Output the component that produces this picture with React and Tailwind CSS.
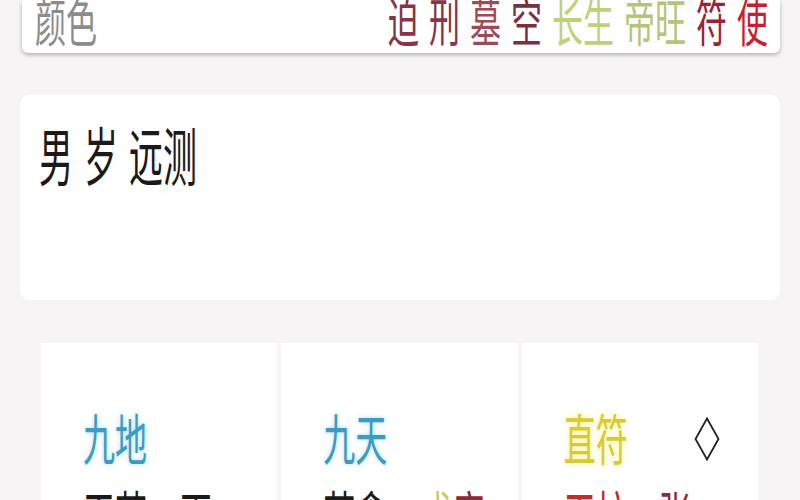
import React from "react";

const S = ({ children, className = "" }) => (
  <span className={"inline-block whitespace-nowrap " + className}>{children}</span>
);

function Cell({ title, titleClass, extra, row2 }) {
  return (
    <div className="bg-white h-[200px] pl-[42px] pt-[66px]">
      <div className="h-[77px] flex items-start">
        <S className={"text-[32px] leading-[32px] origin-top scale-y-[1.7] " + titleClass}>{title}</S>
        {extra}
      </div>
      <div className="flex items-start">{row2}</div>
    </div>
  );
}

export default function App() {
  return (
    <div className="w-[800px] h-[500px] overflow-hidden bg-[#f7f4f6] font-['Noto_Sans_CJK_SC',sans-serif]">
      {/* top card */}
      <div className="mx-[22px] mr-[20px] h-[53px] bg-white rounded-b-[6px] shadow-[0_2px_4px_rgba(0,0,0,0.28)] flex items-end justify-between pl-[13px] pr-[12px] pb-[8px]">
        <S className="text-[31px] leading-[31px] origin-bottom scale-y-[1.7] text-[#8c8c8c]">颜色</S>
        <div className="flex gap-[10px] text-[31px] leading-[31px]">
          <S className="origin-bottom scale-y-[1.7] text-[#8a3446]">迫</S>
          <S className="origin-bottom scale-y-[1.7] text-[#8a3446]">刑</S>
          <S className="origin-bottom scale-y-[1.7] text-[#a04a58]">墓</S>
          <S className="origin-bottom scale-y-[1.7] text-[#7a3040]">空</S>
          <S className="origin-bottom scale-y-[1.7] text-[#bcd27a]">长生</S>
          <S className="origin-bottom scale-y-[1.7] text-[#b4c478]">帝旺</S>
          <S className="origin-bottom scale-y-[1.7] text-[#9c2236]">符</S>
          <S className="origin-bottom scale-y-[1.7] text-[#c8202e]">使</S>
        </div>
      </div>

      {/* question card */}
      <div className="mt-[42px] mx-[20px] h-[205px] bg-white rounded-[10px] pl-[19px] pt-[28px]">
        <div className="flex gap-[11px] text-[34px] leading-[34px] text-[#1a1a1a]">
          <S className="origin-top scale-y-[1.85]">男</S>
          <S className="origin-top scale-y-[1.85]">岁</S>
          <S className="origin-top scale-y-[1.85]">远测</S>
        </div>
      </div>

      {/* grid */}
      <div className="mt-[43px] ml-[41px] w-[717px] grid grid-cols-3 gap-[4px]">
        <Cell
          title="九地"
          titleClass="text-[#3a9cc4] [text-shadow:0_0_4px_rgba(120,200,230,0.6)]"
          row2={
            <>
              <S className="w-[97px] text-[32px] leading-[32px] origin-top scale-y-[1.7] text-[#1a1a1a]">天芮</S>
              <S className="text-[32px] leading-[32px] origin-top scale-y-[1.7] text-[#1a1a1a]">丙</S>
            </>
          }
        />
        <Cell
          title="九天"
          titleClass="text-[#3a9cc4] [text-shadow:0_0_4px_rgba(120,200,230,0.6)]"
          row2={
            <>
              <S className="w-[97px] text-[32px] leading-[32px] origin-top scale-y-[1.7] text-[#1a1a1a]">芮禽</S>
              <S className="text-[32px] leading-[32px] origin-top scale-y-[1.7] text-[#bcd060]">戊</S>
              <S className="text-[32px] leading-[32px] origin-top scale-y-[1.7] text-[#8a2a3a]">庚</S>
            </>
          }
        />
        <Cell
          title="直符"
          titleClass="text-[#d8ca32] [text-shadow:0_0_5px_rgba(250,240,110,0.9)]"
          extra={
            <svg className="ml-[66px] mt-[8px]" width="26" height="44" viewBox="0 0 26 44">
              <path d="M13 1.5 L24.5 22 L13 42.5 L1.5 22 Z" fill="none" stroke="#222" strokeWidth="1.8" strokeLinejoin="miter" />
            </svg>
          }
          row2={
            <>
              <S className="w-[95px] text-[32px] leading-[32px] origin-top scale-y-[1.7] text-[#c42a2a]">天柱</S>
              <S className="text-[32px] leading-[32px] origin-top scale-y-[1.7] text-[#8a2a3a]">张</S>
            </>
          }
        />
      </div>
    </div>
  );
}
